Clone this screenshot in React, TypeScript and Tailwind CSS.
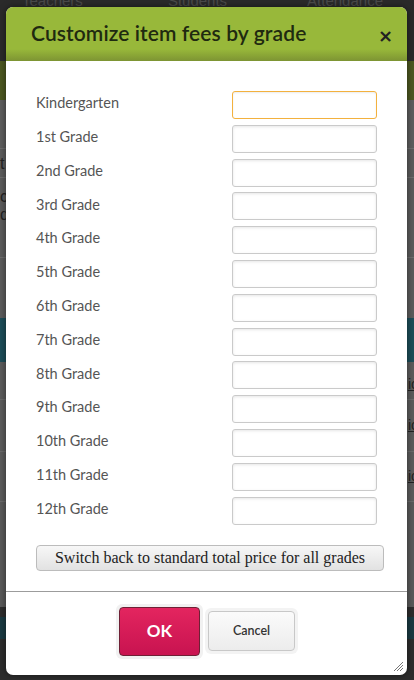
import React from "react";

const grades = [
  "Kindergarten",
  "1st Grade",
  "2nd Grade",
  "3rd Grade",
  "4th Grade",
  "5th Grade",
  "6th Grade",
  "7th Grade",
  "8th Grade",
  "9th Grade",
  "10th Grade",
  "11th Grade",
  "12th Grade",
];

function Background() {
  return (
    <div className="w-[414px] h-[680px] flex flex-col bg-[#5b5b5b] overflow-hidden" style={{ fontFamily: "'Liberation Sans', sans-serif" }}>
      <div className="h-[61px] bg-[#2a2a2a] flex text-[15px] text-[#4a4a4a] leading-none">
        <span className="ml-[22px] mt-[-7px]">Teachers</span>
        <span className="ml-[85px] mt-[-7px]">Students</span>
        <span className="ml-[80px] mt-[-7px]">Attendance</span>
      </div>
      <div className="h-[39px] bg-[#4c5721]" />
      <div className="h-[48px] bg-[#5d5d5d]" />
      <div className="h-[30px] border-t border-b border-[#6d6d6d] bg-[#5b5b5b] text-[16px] text-[#222] leading-[30px] pl-0">t</div>
      <div className="h-[80px] border-b border-[#6d6d6d] text-[16px] text-[#222] leading-[18px] pt-[10px]">
        <div>c</div>
        <div>d</div>
      </div>
      <div className="h-[60px]" />
      <div className="h-[44px] bg-[#1d4d58]" />
      <div className="h-[38px] border-b border-[#6a6a6a] flex justify-end items-end pb-[4px]">
        <span className="text-[14px] text-[#222] underline mr-[-4px]">ic</span>
      </div>
      <div className="h-[52px] border-b border-[#6a6a6a] flex justify-end items-center">
        <span className="text-[14px] text-[#222] underline mr-[-4px]">ic</span>
      </div>
      <div className="h-[50px] border-b border-[#6a6a6a] flex justify-end items-center">
        <span className="text-[14px] text-[#222] underline mr-[-4px]">ic</span>
      </div>
      <div className="h-[105px] bg-[#595959]" />
      <div className="h-[10px] bg-[#2d2d2d]" />
      <div className="h-[22px] bg-[#1b3a42]" />
      <div className="flex-1 bg-[#2d2d2d]" />
    </div>
  );
}

export default function App() {
  return (
    <div className="relative w-[414px] h-[680px] overflow-hidden">
      <Background />
      <div
        className="absolute left-[6px] top-[7px] w-[401px] h-[668px] rounded-[7px] bg-white flex flex-col overflow-hidden shadow-[0_0_6px_rgba(0,0,0,0.5)]"
        style={{ fontFamily: "Lato, 'Open Sans', sans-serif" }}
      >
        <div className="relative h-[54px] shrink-0 bg-[linear-gradient(#98b83a_0%,#98b83a_78%,#7d9433_100%)] flex items-center pl-[25px] pr-[14px]">
          <span className="text-[21px] font-semibold text-[#1f2a10] tracking-[0.1px] mt-[-2px]">Customize item fees by grade</span>
          <span className="ml-auto mt-[4px] text-[18px] font-bold text-[#222] leading-none" style={{ fontFamily: "'DejaVu Sans', sans-serif" }}>×</span>
        </div>
        <div className="flex flex-col pl-[30px] pr-[30px] pt-[30px]">
          <div className="flex flex-col gap-[5.8px]">
            {grades.map((g, i) => (
              <div key={g} className="flex items-center h-[28px]">
                <span className="text-[14.5px] text-[#555] w-[196px] mt-[-4px]">{g}</span>
                <input
                  className={
                    i === 0
                      ? "w-[145px] h-[28px] rounded-[3px] border border-[#f3b13e] bg-white shadow-[inset_0_1px_2px_rgba(0,0,0,0.08)] outline-none"
                      : "w-[145px] h-[28px] rounded-[3px] border border-[#cacaca] bg-white shadow-[inset_0_1px_3px_rgba(0,0,0,0.1)] outline-none"
                  }
                />
              </div>
            ))}
          </div>
          <button
            className="mt-[20px] w-[348px] h-[26px] rounded-[4px] border border-[#bcbcbc] bg-[linear-gradient(#f7f7f7,#e2e2e2)] text-[16px] text-[#222] leading-none"
            style={{ fontFamily: "'Liberation Serif', serif" }}
          >
            Switch back to standard total price for all grades
          </button>
        </div>
        <div className="mt-[20px] h-px bg-[#9c9c9c]" />
        <div className="relative flex-1 flex justify-center items-start pt-[12px] pl-[1px]">
          <div className="flex items-center gap-[2px]">
            <div className="p-[3px] rounded-[6px] bg-[#f1f1f1]">
              <button className="w-[81px] h-[49px] rounded-[4px] border border-[#6e2035] bg-[linear-gradient(#e3255f,#c81350)] text-white text-[17px] font-bold">
                OK
              </button>
            </div>
            <div className="p-[3px] rounded-[6px] bg-[#f3f3f3]">
              <button className="w-[87px] h-[40px] rounded-[4px] border border-[#c8c8c8] bg-[linear-gradient(#fbfbfb,#ececec)] text-[#333] text-[12.5px] font-semibold">
                Cancel
              </button>
            </div>
          </div>
          <svg className="absolute right-[3px] bottom-[3px]" width="12" height="12" viewBox="0 0 12 12">
            <line x1="11" y1="2" x2="2" y2="11" stroke="#777" strokeWidth="1" />
            <line x1="11" y1="5" x2="5" y2="11" stroke="#777" strokeWidth="1" />
            <line x1="11" y1="8" x2="8" y2="11" stroke="#777" strokeWidth="1" />
          </svg>
        </div>
      </div>
    </div>
  );
}
